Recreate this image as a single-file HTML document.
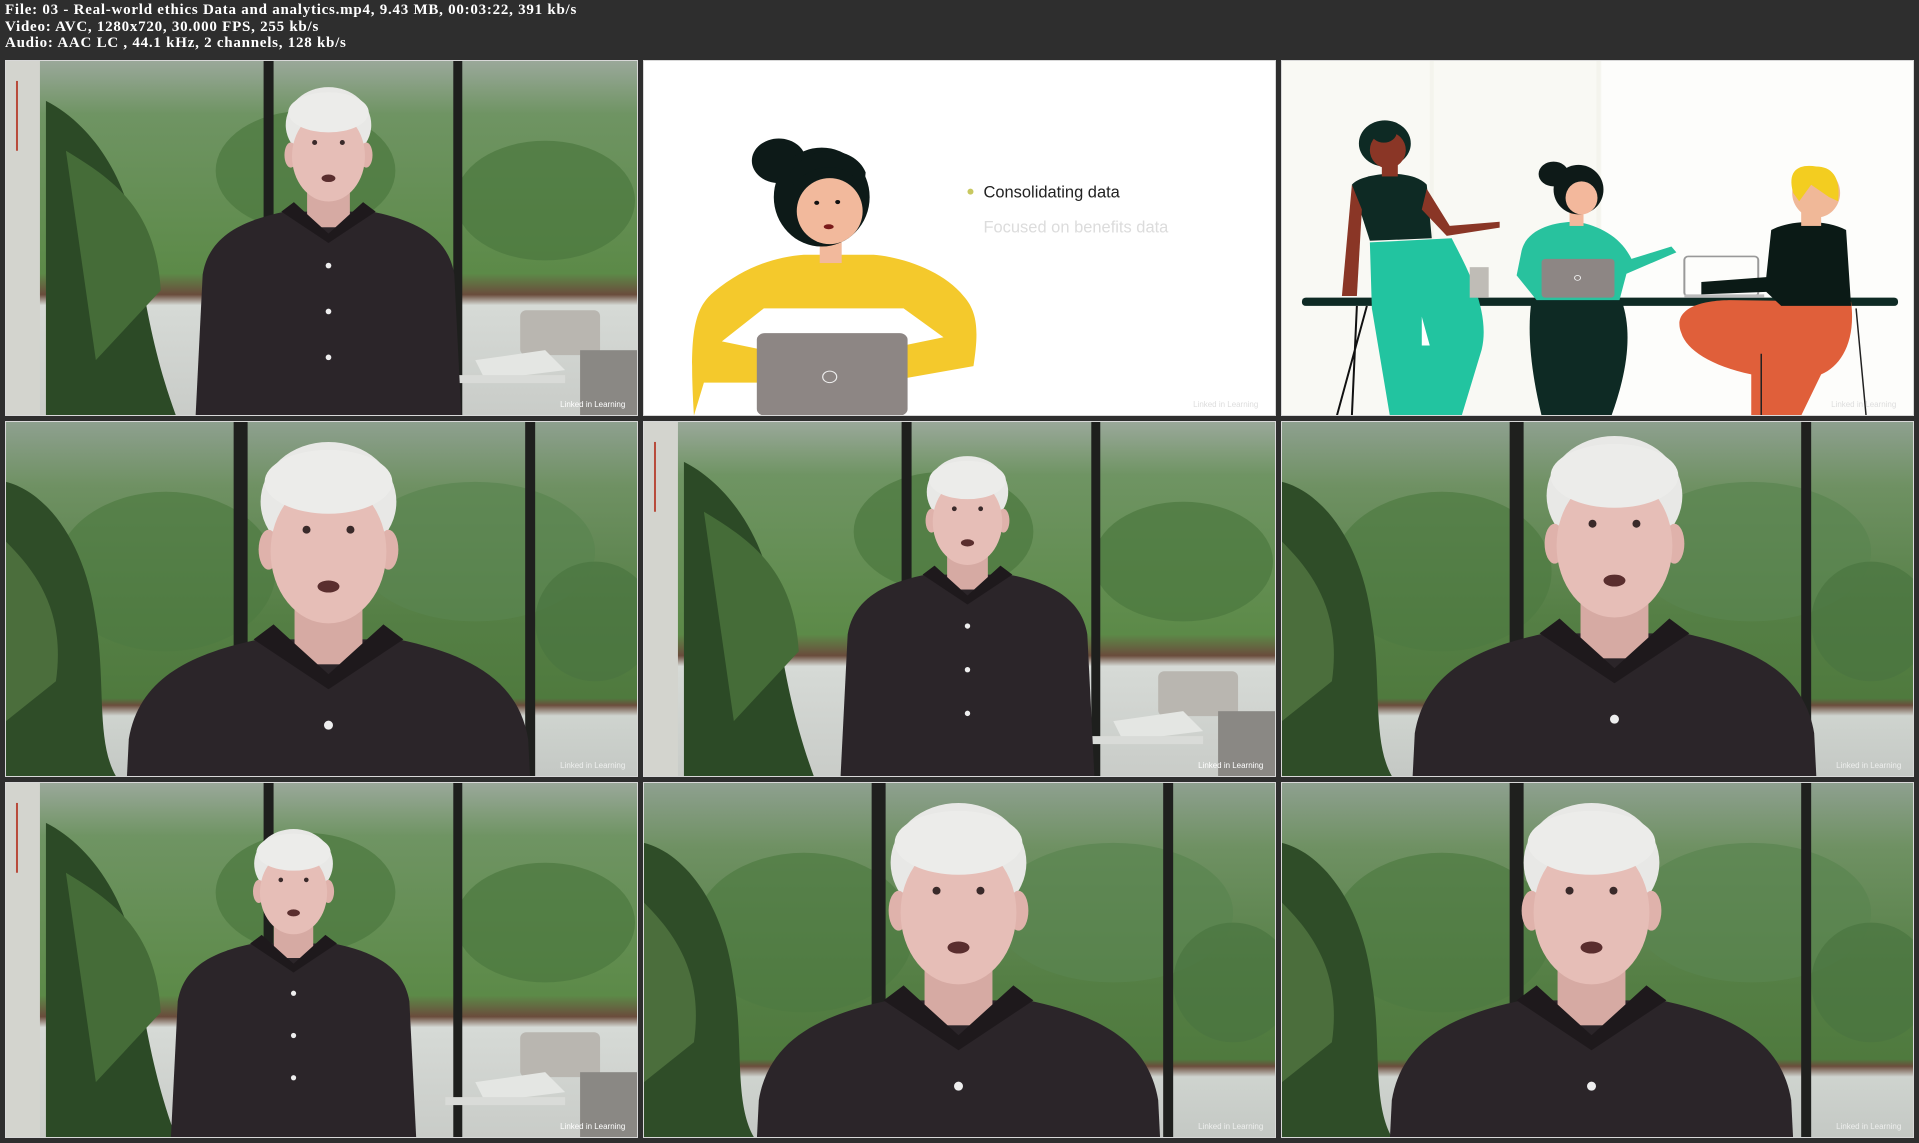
<!DOCTYPE html>
<html><head><meta charset="utf-8"><style>
html,body{margin:0;padding:0;background:#2e2e2e;width:1919px;height:1143px;overflow:hidden;position:relative}
.hdr{position:absolute;left:5px;top:2px;color:#fff;font:bold 15px/16.5px "Liberation Serif",serif;letter-spacing:0.75px;white-space:pre}
.t{position:absolute;width:631px;height:354px;border:1px solid #d8d8d8;overflow:hidden;background:#fff}
.t svg{display:block;width:631px;height:354px}
</style></head><body>
<div class="hdr">File: 03 - Real-world ethics Data and analytics.mp4, 9.43 MB, 00:03:22, 391 kb/s
Video: AVC, 1280x720, 30.000 FPS, 255 kb/s
Audio: AAC LC , 44.1 kHz, 2 channels, 128 kb/s</div>

<svg width="0" height="0" style="position:absolute;left:0;top:0">
<defs>
<linearGradient id="bgc" x1="0" y1="0" x2="0" y2="1">
<stop offset="0" stop-color="#8ea08f"/><stop offset="0.18" stop-color="#6f9163"/><stop offset="0.55" stop-color="#557f45"/><stop offset="0.78" stop-color="#4f7a3e"/><stop offset="0.8" stop-color="#6b4d3c"/><stop offset="0.83" stop-color="#cfd4cf"/><stop offset="1" stop-color="#c4c8c4"/>
</linearGradient>
<linearGradient id="bgw" x1="0" y1="0" x2="0" y2="1">
<stop offset="0" stop-color="#9aa89a"/><stop offset="0.15" stop-color="#6f9463"/><stop offset="0.6" stop-color="#5c8a48"/><stop offset="0.66" stop-color="#6a4c3c"/><stop offset="0.69" stop-color="#d6dad6"/><stop offset="1" stop-color="#c9ccc8"/>
</linearGradient>
<g id="man">
<path d="M-200,300 C-190,240 -140,215 -70,200 L70,200 C140,215 190,240 200,300 L225,800 L-225,800Z" fill="#2b2529"/>
<rect x="-34" y="150" width="68" height="75" fill="#d6aaa3"/>
<path d="M-75,200 L0,250 L75,200 L55,185 L0,235 L-55,185Z" fill="#1e191c"/>
<ellipse cx="0" cy="62" rx="68" ry="60" fill="#e8e8e6"/>
<ellipse cx="-60" cy="110" rx="10" ry="20" fill="#dfb2ab"/>
<ellipse cx="60" cy="110" rx="10" ry="20" fill="#dfb2ab"/>
<ellipse cx="0" cy="112" rx="58" ry="72" fill="#e6beb7"/>
<ellipse cx="0" cy="42" rx="64" ry="32" fill="#ececea"/>
<circle cx="-22" cy="90" r="4" fill="#3a2a2a"/><circle cx="22" cy="90" r="4" fill="#3a2a2a"/>
<ellipse cx="0" cy="147" rx="11" ry="6" fill="#5a2e2e"/>
<circle cx="0" cy="286" r="4.5" fill="#eee"/><circle cx="0" cy="359" r="4.5" fill="#eee"/><circle cx="0" cy="432" r="4.5" fill="#eee"/>
</g>
<g id="close">
<rect width="632" height="355" fill="url(#bgc)"/>
<ellipse cx="160" cy="150" rx="110" ry="80" fill="#4e7a42" opacity=".7"/>
<ellipse cx="470" cy="130" rx="120" ry="70" fill="#5a8450" opacity=".7"/>
<ellipse cx="590" cy="200" rx="60" ry="60" fill="#4a7540" opacity=".7"/>
<rect x="228" y="0" width="14" height="355" fill="#1f201e"/>
<rect x="520" y="0" width="10" height="355" fill="#1f201e"/>
<path d="M0,60 C40,70 80,120 90,200 C100,260 90,320 110,355 L0,355Z" fill="#2f4d28"/>
<path d="M0,120 C30,150 60,190 50,260 L0,300Z" fill="#4b6e3c"/>
<text x="555" y="347" font-family="Liberation Sans,sans-serif" font-size="8" fill="#fff" opacity=".7">Linked in Learning</text>
</g>
<g id="wide">
<rect width="632" height="355" fill="url(#bgw)"/>
<ellipse cx="300" cy="110" rx="90" ry="60" fill="#4c783f" opacity=".7"/>
<ellipse cx="540" cy="140" rx="90" ry="60" fill="#4b773e" opacity=".7"/>
<rect x="0" y="0" width="34" height="355" fill="#d3d4ce"/>
<rect x="10" y="20" width="2" height="70" fill="#b84a3a"/>
<rect x="258" y="0" width="10" height="355" fill="#1e1f1d"/>
<rect x="448" y="0" width="9" height="355" fill="#1e1f1d"/>
<path d="M40,40 C80,60 120,110 130,180 C140,250 150,300 170,355 L40,355Z" fill="#2c4a26"/>
<path d="M60,90 C110,120 150,150 155,230 L90,300Z" fill="#456c38"/>
<rect x="515" y="250" width="80" height="45" rx="6" fill="#b9b6b0"/>
<path d="M470,300 L540,290 L560,310 L480,320Z" fill="#e4e6e3"/>
<rect x="440" y="315" width="120" height="8" fill="#d9dbd8"/>
<rect x="575" y="290" width="57" height="65" fill="#8a8884"/>
<text x="555" y="347" font-family="Liberation Sans,sans-serif" font-size="8" fill="#fff">Linked in Learning</text>
</g>
</defs></svg>

<!-- Row 1 -->
<div class="t" style="left:5px;top:60px"><svg viewBox="0 0 632 355" preserveAspectRatio="none"><use href="#wide"/><use href="#man" transform="translate(323,25) scale(0.63)"/></svg></div>

<div class="t" style="left:643px;top:60px"><svg viewBox="0 0 632 355" preserveAspectRatio="none">
<rect width="632" height="355" fill="#fff"/>
<g transform="scale(1,0.827)">
<path d="M50,430 C45,330 50,300 70,280 C100,250 130,238 160,235 L230,235 C260,238 300,255 320,285 C335,305 335,330 330,370 L260,385 L260,345 L300,335 L260,300 L120,300 L78,340 L118,350 L118,390 L60,390Z" fill="#f4c92c"/>
<rect x="176" y="205" width="22" height="40" fill="#f2b99c"/>
<circle cx="135" cy="121" r="27" fill="#0d1a18"/>
<ellipse cx="178" cy="165" rx="48" ry="60" fill="#0d1a18"/>
<ellipse cx="186" cy="182" rx="33" ry="40" fill="#f2b99c"/>
<path d="M150,150 C170,120 210,120 220,160 L222,135 C210,100 160,100 145,140Z" fill="#0d1a18"/>
<circle cx="173" cy="172" r="2.5" fill="#111"/><circle cx="194" cy="171" r="2.5" fill="#111"/>
<ellipse cx="185" cy="201" rx="5" ry="3" fill="#7a1a1a"/>
<rect x="113" y="330" width="151" height="100" rx="8" fill="#8d8684"/>
<circle cx="186" cy="383" r="7" fill="none" stroke="#eee" stroke-width="1.2"/>
</g>
<circle cx="327" cy="131" r="3" fill="#c8c860"/>
<text x="340" y="137" font-family="Liberation Sans,sans-serif" font-size="16.5" fill="#222">Consolidating data</text>
<text x="340" y="172" font-family="Liberation Sans,sans-serif" font-size="16.5" fill="#dcdcdc">Focused on benefits data</text>
<text x="550" y="347" font-family="Liberation Sans,sans-serif" font-size="8" fill="#ddd">Linked in Learning</text>
</svg></div>

<div class="t" style="left:1281px;top:60px"><svg viewBox="0 0 632 355" preserveAspectRatio="none">
<rect width="632" height="355" fill="#fdfdfb"/>
<rect x="148" y="0" width="4" height="370" fill="#f0f1e8"/><rect x="315" y="0" width="4" height="370" fill="#f0f1e8"/>
<rect x="0" y="0" width="320" height="370" fill="#f6f7f0" opacity=".6"/>
<g transform="scale(1,0.827)">
<rect x="20" y="287" width="597" height="10" rx="4" fill="#0e2a24"/>
<path d="M85,297 L55,430 M75,297 L70,430" stroke="#111" stroke-width="2"/>
<path d="M88,220 L90,300 L108,430 L180,430 L200,350 C210,300 180,240 170,215Z" fill="#22c4a0"/>
<path d="M140,310 L148,345 L140,345Z" fill="#fff"/>
<path d="M70,150 C80,135 130,130 145,150 L150,215 L88,218Z" fill="#0e2a24"/>
<path d="M70,150 L60,285 L75,285 L80,180Z" fill="#8a3626"/>
<path d="M145,155 L168,200 L218,195 L218,202 L165,212 L140,180Z" fill="#8a3626"/>
<rect x="100" y="120" width="16" height="20" fill="#8a3626"/>
<ellipse cx="103" cy="100" rx="26" ry="28" fill="#0e2a24"/>
<ellipse cx="106" cy="108" rx="18" ry="22" fill="#8a3626"/>
<circle cx="102" cy="86" r="13" fill="#0e2a24"/>
<rect x="188" y="250" width="19" height="37" fill="#bfbcb6"/>
<path d="M250,290 C245,330 250,380 260,430 L330,430 C345,380 352,330 340,290Z" fill="#0e2a24"/>
<path d="M240,230 C245,205 270,195 295,195 C320,200 340,215 350,240 L390,225 L395,232 L345,258 L338,290 L255,290 L235,260Z" fill="#28c29e"/>
<rect x="288" y="180" width="14" height="20" fill="#f3b89c"/>
<circle cx="272" cy="137" r="15" fill="#0e1a18"/>
<ellipse cx="297" cy="156" rx="25" ry="30" fill="#0e1a18"/>
<ellipse cx="300" cy="166" rx="16" ry="20" fill="#f3b89c"/>
<rect x="260" y="240" width="73" height="47" rx="4" fill="#8d8684"/>
<circle cx="296" cy="263" r="3" fill="none" stroke="#eee"/>
<rect x="403" y="237" width="74" height="48" rx="4" fill="none" stroke="#999" stroke-width="2"/>
<rect x="403" y="283" width="80" height="4" fill="#bbb"/>
<path d="M400,330 C390,300 420,290 450,290 L570,292 C575,340 560,370 540,380 L520,430 L470,430 L470,380 C430,370 405,350 400,330Z" fill="#e05f3a"/>
<path d="M490,205 C510,192 545,192 565,205 L570,297 L500,297 L485,280 L420,283 L420,268 L485,262Z" fill="#0b1a16"/>
<rect x="520" y="180" width="20" height="20" fill="#f0b898"/>
<ellipse cx="535" cy="160" rx="24" ry="30" fill="#f0b898"/>
<path d="M512,160 C505,130 520,125 535,128 C550,128 560,140 557,170 L548,165 L530,150 L518,170Z" fill="#f3cd20"/>
<path d="M480,355 L480,430 M575,300 L585,430" stroke="#222" stroke-width="1.5"/>
</g>
<text x="550" y="347" font-family="Liberation Sans,sans-serif" font-size="8" fill="#ddd">Linked in Learning</text>
</svg></div>

<!-- Row 2 -->
<div class="t" style="left:5px;top:421px"><svg viewBox="0 0 632 355" preserveAspectRatio="none"><use href="#close"/><use href="#man" transform="translate(323,18)"/></svg></div>
<div class="t" style="left:643px;top:421px"><svg viewBox="0 0 632 355" preserveAspectRatio="none"><use href="#wide"/><use href="#man" transform="translate(324,33) scale(0.6)"/></svg></div>
<div class="t" style="left:1281px;top:421px"><svg viewBox="0 0 632 355" preserveAspectRatio="none"><use href="#close"/><use href="#man" transform="translate(333,12)"/></svg></div>

<!-- Row 3 -->
<div class="t" style="left:5px;top:782px"><svg viewBox="0 0 632 355" preserveAspectRatio="none"><use href="#wide"/><use href="#man" transform="translate(288,45) scale(0.58)"/></svg></div>
<div class="t" style="left:643px;top:782px"><svg viewBox="0 0 632 355" preserveAspectRatio="none"><use href="#close"/><use href="#man" transform="translate(315,18)"/></svg></div>
<div class="t" style="left:1281px;top:782px"><svg viewBox="0 0 632 355" preserveAspectRatio="none"><use href="#close"/><use href="#man" transform="translate(310,18)"/></svg></div>
</body></html>
